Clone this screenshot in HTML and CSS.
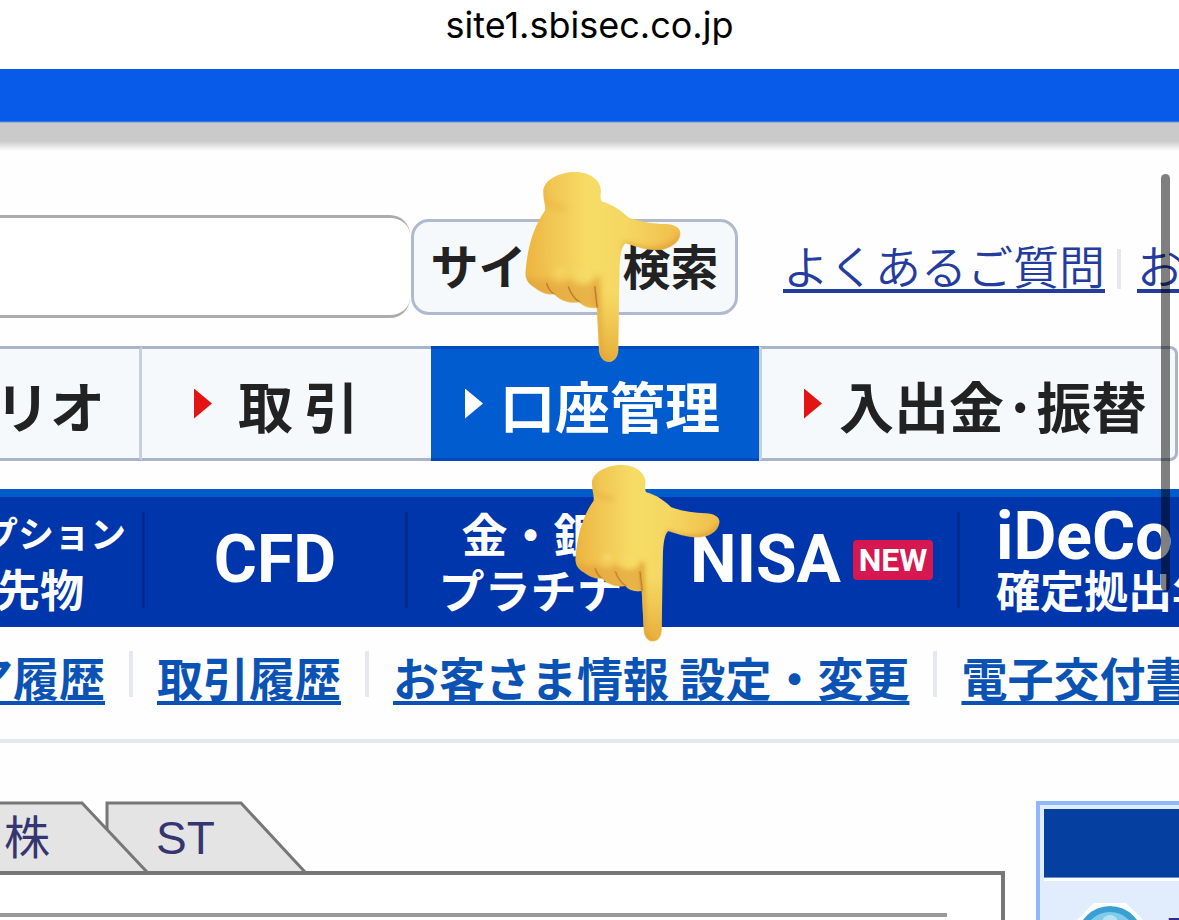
FILE: index.html
```html
<!DOCTYPE html>
<html lang="ja">
<head>
    <meta charset="UTF-8">
    <meta name="viewport" content="width=device-width, initial-scale=1.0">
    <title>口座管理</title>
    <link rel="stylesheet" href="styles.css">
</head>
<body>
    <div class="address-bar">site1.sbisec.co.jp</div>
    <div class="top-band"></div>

    <form class="search-row">
        <input type="text" class="search-input" aria-label="サイト内検索">
        <button type="button" class="search-btn">サイト内検索</button>
        <div class="help-links">
            <a href="#">よくあるご質問</a>
            <span class="divider"></span>
            <a href="#">お問い合わせ</a>
        </div>
    </form>

    <nav class="main-nav">
        <a href="#" class="nav-item nav-portfolio">リオ</a>
        <a href="#" class="nav-item nav-trade"><span class="arrow"></span>取&thinsp;引</a>
        <a href="#" class="nav-item nav-account active"><span class="arrow"></span>口座管理</a>
        <a href="#" class="nav-item nav-cash"><span class="arrow"></span>入出金·振替</a>
    </nav>

    <nav class="product-nav">
        <a href="#" class="product product-option"><span class="small">プション</span><span class="medium">先物</span></a>
        <a href="#" class="product product-cfd"><span class="latin">CFD</span></a>
        <a href="#" class="product product-gold"><span>金・銀</span><span>プラチナ</span></a>
        <a href="#" class="product product-nisa"><span class="latin">NISA</span><span class="new-badge">NEW</span></a>
        <a href="#" class="product product-ideco"><span class="latin">iDeCo</span><span class="medium">確定拠出年金</span></a>
    </nav>

    <nav class="sub-nav">
        <a href="#" class="sub-first">ア履歴</a>
        <span class="divider"></span>
        <a href="#">取引履歴</a>
        <span class="divider"></span>
        <a href="#">お客さま情報 設定・変更</a>
        <span class="divider"></span>
        <a href="#">電子交付書面</a>
    </nav>

    <main class="content">
        <section class="main-column">
            <div class="tabs">
                <svg class="tabs-shape" width="308" height="70" viewBox="0 0 308 70" aria-hidden="true">
                    <path d="M107 72V2H241L305 71" fill="#e4e4e4" stroke="#777" stroke-width="3"/>
                    <path d="M-4 2H82L147 71V72H-4Z" fill="#e4e4e4"/>
                    <path d="M-4 2H82L147 71" fill="none" stroke="#777" stroke-width="3"/>
                </svg>
                <a href="#" class="tab">株</a>
                <a href="#" class="tab">ST</a>
            </div>
            <div class="panel"><div class="panel-line"></div></div>
        </section>
        <aside class="side-box">
            <div class="side-title"></div>
            <div class="side-body">
                <svg width="80" height="80" viewBox="0 0 80 80" aria-hidden="true">
                    <path d="M24 0H56L80 24V80H0V24Z" fill="#fff"/>
                    <circle cx="40" cy="36" r="33" fill="#3a9fd3"/>
                    <circle cx="40" cy="36" r="27" fill="#7fcbeb"/>
                    <circle cx="40" cy="20" r="8" fill="#b5e2f5"/>
                </svg>
                <a href="#">マ</a>
            </div>
        </aside>
    </main>

    <svg class="hand hand-first" viewBox="375 33 467 573" aria-hidden="true">
        <defs>
            <linearGradient id="skin" x1="0" y1="0" x2="1" y2="0">
                <stop offset="0" stop-color="#ecb43f"/>
                <stop offset=".15" stop-color="#f1c450"/>
                <stop offset=".4" stop-color="#f6dc66"/>
                <stop offset=".65" stop-color="#f5d762"/>
                <stop offset="1" stop-color="#f0bd4a"/>
            </linearGradient>
            <linearGradient id="shade" x1="0" y1="0" x2="0" y2="1">
                <stop offset="0" stop-color="#e9ac38" stop-opacity="0"/>
                <stop offset="1" stop-color="#e4a334" stop-opacity=".85"/>
            </linearGradient>
            <filter id="soft" x="-30%" y="-30%" width="160%" height="160%"><feGaussianBlur stdDeviation="9"/></filter>
            <path id="hand-outline" d="M430 100C425 60 480 34 530 36C580 38 605 70 602 96C600 110 601 119 605 124C640 134 662 151 685 172C718 185 758 190 795 192C826 193 842 206 840 222C835 252 802 269 770 269C730 269 702 256 676 249C663 258 659 290 658 330L654 570C652 591 641 604 626 604C610 604 600 590 597 572L590 441C570 446 548 438 537 425C510 431 478 420 462 401C436 405 416 391 404 382C382 370 374 352 377 330C382 268 399 200 435 151C437 134 430 120 430 100Z"/>
            <clipPath id="hand-clip"><use href="#hand-outline"/></clipPath>
            <g id="hand">
                <use href="#hand-outline" fill="url(#skin)"/>
                <g clip-path="url(#hand-clip)">
                    <g filter="url(#soft)">
                        <path d="M424 70C424 120 440 142 500 144" fill="none" stroke="#e0a33a" stroke-width="14" opacity=".4"/>
                        <path d="M670 254C720 281 810 284 846 229" fill="none" stroke="#dfa036" stroke-width="20"/>
                        <path d="M365 350C400 350 428 372 438 350C462 374 490 374 505 353C530 378 555 378 580 362L594 450H370Z" fill="#e2a33a" opacity=".7"/>
                        <path d="M590 350L598 580L626 612" fill="none" stroke="#dda036" stroke-width="14"/>
                        <ellipse cx="478" cy="333" rx="15" ry="10" fill="#fae078" opacity=".7"/>
                        <ellipse cx="541" cy="333" rx="15" ry="10" fill="#f8dc71" opacity=".7"/>
                    </g>
                    <path d="M590 400H660V610H590Z" fill="url(#shade)"/>
                    <path d="M440 370C444 384 451 395 463 402M505 380C512 400 522 415 539 426M584 380L591 441" fill="none" stroke="#b6782a" stroke-width="4" stroke-linecap="round"/>
                </g>
            </g>
        </defs>
        <use href="#hand"/>
    </svg>
    <svg class="hand hand-second" viewBox="375 33 467 573" aria-hidden="true"><use href="#hand"/></svg>

    <div class="scroll-thumb"></div>
</body>
</html>
```
FILE: styles.css
```css
* {
    box-sizing: border-box;
}
body {
    margin: 0;
    height: 100vh;
    display: flex;
    flex-direction: column;
    position: relative;
    overflow: hidden;
    background-color: #fefefe;
    font-family: "Noto Sans CJK JP", sans-serif;
    white-space: nowrap;
}
.address-bar {
    height: 69px;
    flex: none;
    background-color: #fff;
    color: #000;
    font-family: Inter, sans-serif;
    font-size: 36px;
    line-height: 50px;
    text-align: center;
}
.top-band {
    height: 82px;
    flex: none;
    background: linear-gradient(#085ae9 0 52px, #cacaca 54px 72px, #fefefe 82px);
}

/* search */
.search-row {
    height: 195px;
    flex: none;
    display: flex;
    align-items: center;
    padding-top: 64px;
    padding-bottom: 28px;
    overflow: hidden;
}
.search-input {
    width: 410px;
    height: 103px;
    flex: none;
    border: 3px solid #acacac;
    border-left: 0;
    border-right: 0;
    border-radius: 0 20px 20px 0;
    background-color: #fff;
    font-size: 46px;
}
.search-btn {
    width: 327px;
    height: 96px;
    flex: none;
    margin-left: 1px;
    padding: 0 16px 6px;
    border: 3px solid #b0b9ce;
    border-radius: 18px;
    background-color: #f5f9fc;
    color: #222;
    font-family: inherit;
    font-size: 48px;
    font-weight: bold;
    line-height: 84px;
}
.help-links {
    display: flex;
    align-items: center;
    gap: 12px;
    margin-left: 45px;
    padding-bottom: 6px;
}
.help-links a {
    color: #243c9e;
    font-size: 46px;
    font-weight: 350;
    line-height: 60px;
    text-decoration-thickness: 4px;
    text-underline-offset: 5px;
    text-decoration-skip-ink: none;
}
.divider {
    width: 4px;
    height: 46px;
    background-color: #e6e7f0;
}
.help-links .divider {
    height: 40px;
    margin-top: 10px;
    margin-right: 4px;
}

/* main menu */
.main-nav {
    display: flex;
    height: 115px;
    flex: none;
    margin-right: 1px;
}
.nav-item {
    display: flex;
    align-items: center;
    flex: none;
    border: solid #aab4c8;
    border-width: 3px 0;
    background-color: #f5f9fc;
    color: #222;
    font-size: 55px;
    font-weight: bold;
    text-decoration: none;
}
.nav-portfolio {
    width: 142px;
    justify-content: flex-end;
    padding-right: 34px;
    border-right: 3px solid #c6cfde;
}
.nav-trade {
    width: 289px;
    padding-left: 52px;
}
.nav-account {
    width: 328px;
    padding-left: 34px;
}
.nav-cash {
    flex: 1;
    padding-left: 42px;
    border-width: 3px;
    border-left-color: #c6cfde;
    border-radius: 0 8px 8px 0;
}
.nav-item.active {
    border-color: #0049bb;
    background-color: #005ccf;
    color: #fff;
}
.arrow {
    width: 18px;
    height: 30px;
    flex: none;
    margin-right: 17px;
    background-color: #e31414;
    clip-path: polygon(0 0, 100% 50%, 0 100%);
}
.nav-trade .arrow {
    margin-right: 26px;
}
.active .arrow {
    background-color: #fff;
}

/* products */
.product-nav {
    display: flex;
    height: 138px;
    flex: none;
    margin-top: 28px;
    padding-top: 15px;
    border-top: 8px solid #005bcb;
    background-color: #0036ac;
    overflow: hidden;
}
.product {
    display: flex;
    flex-direction: column;
    align-items: center;
    justify-content: center;
    flex: none;
    height: 96px;
    border-right: 3px solid #002b8d;
    color: #fff;
    font-size: 46px;
    font-weight: bold;
    line-height: 56px;
    text-decoration: none;
}
.small {
    font-size: 36px;
}
.medium {
    font-size: 44px;
}
.latin {
    font-family: Roboto, sans-serif;
    font-size: 66px;
}
.product-option {
    width: 145px;
    align-items: flex-end;
    padding-right: 16px;
}
.product-option .medium {
    margin-right: 42px;
}
.product-cfd {
    width: 263px;
}
.product-gold {
    width: 248px;
}
.product-nisa {
    width: 304px;
    flex-direction: row;
    gap: 12px;
    padding-left: 10px;
}
.product-ideco {
    align-items: flex-start;
    padding-top: 5px;
    padding-left: 36px;
    border-right: 0;
    line-height: 52px;
}
.new-badge {
    width: 80px;
    border-radius: 4px;
    background-color: #d7174f;
    font-family: Roboto, sans-serif;
    font-size: 32px;
    line-height: 40px;
    text-align: center;
}

/* sub menu */
.sub-nav {
    display: flex;
    align-items: center;
    gap: 24px;
    height: 116px;
    flex: none;
    padding-bottom: 14px;
    border-bottom: 4px solid #e6e7f0;
    overflow: hidden;
}
.sub-nav a {
    flex: none;
    color: #0a53b4;
    font-size: 46px;
    font-weight: bold;
    line-height: 60px;
    text-decoration-thickness: 4px;
    text-underline-offset: 5px;
    text-decoration-skip-ink: none;
}
.sub-nav .divider {
    flex: none;
    margin-bottom: 4px;
}
.sub-first {
    display: flex;
    justify-content: flex-end;
    width: 105px;
    text-decoration: underline;
}

/* content */
.content {
    display: flex;
    flex: 1;
    gap: 31px;
    min-height: 0;
    padding-top: 58px;
}
.main-column {
    display: flex;
    flex-direction: column;
    width: 1005px;
    flex: none;
}
.tabs {
    display: flex;
    align-items: center;
    gap: 106px;
    position: relative;
    height: 70px;
    flex: none;
    padding-top: 4px;
    padding-left: 4px;
}
.tabs-shape {
    position: absolute;
    top: 0;
    left: 0;
}
.tab {
    position: relative;
    color: #35356f;
    font-family: "Liberation Sans", "Noto Sans CJK JP", sans-serif;
    font-size: 46px;
    line-height: 60px;
    text-decoration: none;
}
.panel {
    flex: 1;
    padding: 38px 54px 0 0;
    border-top: 4px solid #777;
    border-right: 4px solid #777;
    background-color: #fff;
}
.panel-line {
    height: 4px;
    background-color: #999;
}
.side-box {
    flex: 1;
    min-width: 0;
    padding: 4px 0 0 4px;
    border: solid #8fb8f8;
    border-width: 4px 0 0 4px;
    background-color: #e1ecfd;
    overflow: hidden;
}
.side-title {
    height: 69px;
    background-color: #053f9f;
    border-bottom: 1px solid #6b93cf;
}
.side-body {
    display: flex;
    align-items: flex-start;
    gap: 14px;
    padding: 22px 0 0 26px;
    border-top: 3px solid #fff;
}
.side-body svg {
    flex: none;
}
.side-body a {
    color: #2a2f8f;
    font-size: 46px;
    line-height: 52px;
    text-decoration: none;
}

/* overlays */
.hand {
    position: absolute;
}
.hand-first {
    top: 171px;
    left: 525px;
    width: 156px;
}
.hand-second {
    top: 464px;
    left: 575px;
    width: 145px;
}
.scroll-thumb {
    position: absolute;
    top: 174px;
    right: 9px;
    width: 9px;
    height: 417px;
    border-radius: 5px;
    background-color: rgba(0, 0, 0, 0.5);
}
```
